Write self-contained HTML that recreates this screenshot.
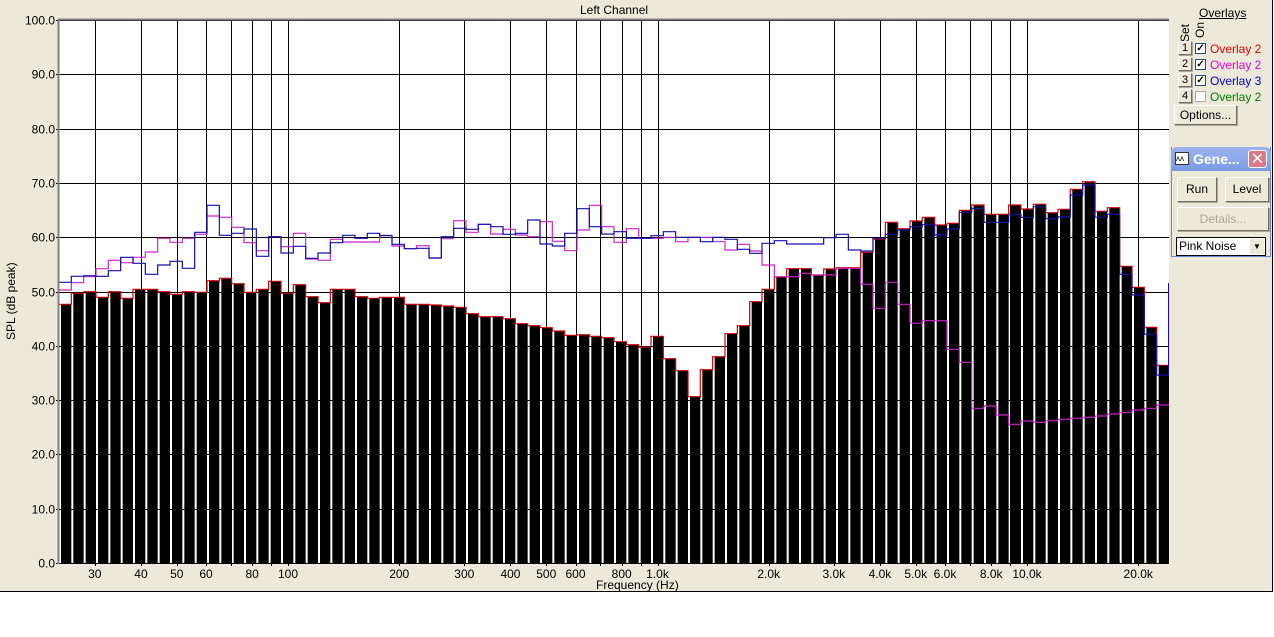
<!DOCTYPE html>
<html><head><meta charset="utf-8">
<style>
html,body{margin:0;padding:0;background:#fff;width:1274px;height:637px;overflow:hidden;font-family:"Liberation Sans",Arial,sans-serif;}
#app{position:absolute;left:0;top:0;width:1273px;height:592px;background:#ece9d8;border-bottom:1px solid #000;border-right:1px solid #000;box-sizing:border-box;}
.t{position:absolute;font-size:12px;color:#000;white-space:nowrap;}
.btn{position:absolute;background:#ece9d8;border:1px solid;border-color:#fff #716f64 #716f64 #fff;box-shadow:1px 1px 0 #aca899;font-size:12px;text-align:center;box-sizing:border-box;}
.cb{position:absolute;width:11px;height:11px;background:#fff;border:1px solid #1c5180;box-sizing:border-box;font-size:10px;line-height:9px;text-align:center;font-weight:bold;}
</style></head><body>
<div id="app">
<div class="t" style="left:580px;top:3px;">Left Channel</div>
<svg id="plot" width="1274" height="600" style="position:absolute;left:0;top:0" xmlns="http://www.w3.org/2000/svg"></svg>
<div class="t" style="left:4px;top:340px;transform:rotate(-90deg);transform-origin:0 0;">SPL (dB peak)</div>
<div class="t" style="left:596px;top:578px;">Frequency (Hz)</div>

<div class="t" style="left:1199px;top:6px;text-decoration:underline;">Overlays</div>
<div class="t" style="left:1178px;top:42px;transform:rotate(-90deg);transform-origin:0 0;">Set</div>
<div class="t" style="left:1193px;top:38px;transform:rotate(-90deg);transform-origin:0 0;">On</div>
<div class="btn" style="left:1178px;top:41px;width:14px;height:14px;font-size:11px;line-height:12px;">1</div>
<div class="btn" style="left:1178px;top:57px;width:14px;height:14px;font-size:11px;line-height:12px;">2</div>
<div class="btn" style="left:1178px;top:73px;width:14px;height:14px;font-size:11px;line-height:12px;">3</div>
<div class="btn" style="left:1178px;top:89px;width:14px;height:14px;font-size:11px;line-height:12px;">4</div>
<div class="cb" style="left:1195px;top:43px;">✓</div>
<div class="cb" style="left:1195px;top:59px;">✓</div>
<div class="cb" style="left:1195px;top:75px;">✓</div>
<div class="cb" style="left:1195px;top:91px;border-color:#aaa"></div>
<div class="t" style="left:1210px;top:42px;color:#e00000;">Overlay 2</div>
<div class="t" style="left:1210px;top:58px;color:#e000e0;">Overlay 2</div>
<div class="t" style="left:1210px;top:74px;color:#0000d0;">Overlay 3</div>
<div class="t" style="left:1210px;top:90px;color:#008000;">Overlay 2</div>
<div class="btn" style="left:1174px;top:105px;width:63px;height:20px;line-height:18px;">Options...</div>

<div style="position:absolute;left:1171px;top:147px;width:100px;height:110px;background:#ece9d8;border:1px solid #6a86d8;border-top:none;box-sizing:border-box;">
 <div style="position:absolute;left:-1px;top:0;width:100px;height:24px;background:linear-gradient(#9bb4ef,#7a9be3);border-radius:6px 6px 0 0;"></div>
 <div style="position:absolute;left:3px;top:5px;width:14px;height:13px;background:#fff;border:1px solid #333;box-sizing:border-box;font-size:8px;line-height:11px;">ʌʌ</div>
 <div class="t" style="left:21px;top:4px;color:#fff;font-weight:bold;font-size:14px;">Gene...</div>
 <div style="position:absolute;left:76px;top:3px;width:19px;height:18px;background:#d87a8a;border:1px solid #fff;border-radius:3px;color:#fff;font-size:16px;line-height:17px;text-align:center;box-sizing:border-box;">✕</div>
 <div class="btn" style="left:5px;top:30px;width:40px;height:25px;line-height:23px;">Run</div>
 <div class="btn" style="left:53px;top:30px;width:44px;height:25px;line-height:23px;">Level</div>
 <div class="btn" style="left:5px;top:60px;width:92px;height:24px;line-height:22px;color:#aca899;">Details...</div>
 <div style="position:absolute;left:4px;top:90px;width:90px;height:19px;background:#fff;border:1px solid #000;box-sizing:border-box;font-size:12px;line-height:17px;padding-left:2px;">Pink Noise<div style="position:absolute;right:1px;top:1px;width:14px;height:15px;background:#ece9d8;font-size:8px;line-height:15px;text-align:center;">▼</div></div>
</div>
</div>
<script>
var svg=document.getElementById('plot');var NS='http://www.w3.org/2000/svg';
function el(n,a){var e=document.createElementNS(NS,n);for(var k in a)e.setAttribute(k,a[k]);svg.appendChild(e);return e;}
var L=59,R=1169,T=20,B=563;
el('rect',{x:L,y:T,width:R-L,height:B-T,fill:'#fff'});
function fx(f){return 288+369.5*Math.log10(f/100);}
var fr=[30,40,50,60,70,80,90,100,200,300,400,500,600,700,800,900,1000,2000,3000,4000,5000,6000,7000,8000,9000,10000,20000];
fr.forEach(function(f){var x=Math.round(fx(f))+0.5;el('line',{x1:x,y1:T,x2:x,y2:B+3,stroke:'#000','stroke-width':1});});
for(var d=0;d<=10;d++){var y=Math.round(B-d*54.3)+0.5;el('line',{x1:L-3,y1:y,x2:R,y2:y,stroke:'#000','stroke-width':1});
 var t=el('text',{x:55,y:y+4,'font-size':12,'text-anchor':'end','font-family':'Liberation Sans'});t.textContent=(d*10).toFixed(1);}
var labs=[[30,'30'],[40,'40'],[50,'50'],[60,'60'],[80,'80'],[100,'100'],[200,'200'],[300,'300'],[400,'400'],[500,'500'],[600,'600'],[800,'800'],[1000,'1.0k'],[2000,'2.0k'],[3000,'3.0k'],[4000,'4.0k'],[5000,'5.0k'],[6000,'6.0k'],[8000,'8.0k'],[10000,'10.0k'],[20000,'20.0k']];
labs.forEach(function(l){var t=el('text',{x:fx(l[0]),y:578,'font-size':12,'text-anchor':'middle','font-family':'Liberation Sans'});t.textContent=l[1];});
var z1=[373,340,335,352,335,355,328,328,335,343,335,337,302,295,311,337,328,304,340,314,350,368,328,328,350,355,352,352,373];
var z2=[373,375,378,382,401,410,410,416,431,437,443,453,466,464,469,473,485,494,502,469,536,572,650,569,530,461,437,365,328,291,266,266,285];
var z3=[297,293,293,247,207,157,176,153,142,165,160,121,105,133,133,105,117,103,128,118,58,35,124,113,289,352,472,586];
var m1=[330,308,290,266,241,248,232,216,175,187,175,163,108,112,142,188,212,170,200,160,237,241,178,186,186,186,166,198,206];
var m2=[197,234,176,122,157,133,162,148,165,170,125,184,212,150,76,140,187,146,175,175,172,185,172,172,185,210,193,213,255,290,290,280,285];
var m3=[315,295,295,343,415,337,403,460,452,452,538,577,715,708,735,763,753,757,752,748,745,742,738,732,727,720,715,705];
var b1=[307,289,287,289,272,232,250,283,255,244,265,157,76,166,160,147,229,170,219,199,235,219,188,166,175,160,167,193,206];
var b2=[205,234,170,145,148,133,140,163,160,120,192,198,160,86,140,162,155,175,175,167,155,172,172,185,172,178,208,220,190,182,192,192,192];
var b3=[203,193,240,243,205,193,180,170,163,195,177,127,115,157,157,133,142,110,146,140,75,45,142,133,313,375,493,615];
function cv(a,o){return a.map(function(v){return o+v/3;});}
var bars=cv(z1,180).concat(cv(z2,180),cv(z3,170));
var mag=cv(m1,180).concat(cv(m2,180),cv(m3,170));
var blu=cv(b1,180).concat(cv(b2,180),cv(b3,170));
var n=bars.length,p=(R-L)/n;
for(var i=0;i<n;i++){var x0=L+i*p+2;el('rect',{x:x0,y:bars[i],width:p-2,height:B-bars[i],fill:'#000'});}
function step(a,c){var d='M'+L+' '+a[0];for(var i=0;i<a.length;i++){var x0=L+i*p,x1=L+(i+1)*p;d+=' L'+x0+' '+a[i]+' L'+x1+' '+a[i];}el('path',{d:d,fill:'none',stroke:c,'stroke-width':1.2});}
step(bars,'#d00000');
step(mag,'#d020d0');step(blu,'#1010b0');
el('line',{x1:R-0.5,y1:283,x2:R-0.5,y2:375,stroke:'#1010b0'});
el('line',{x1:L-0.5,y1:T-1,x2:L-0.5,y2:B+1,stroke:'#808080','stroke-width':2});
el('line',{x1:L-1,y1:T-0.5,x2:R,y2:T-0.5,stroke:'#808080','stroke-width':2});
</script>
</body></html>
